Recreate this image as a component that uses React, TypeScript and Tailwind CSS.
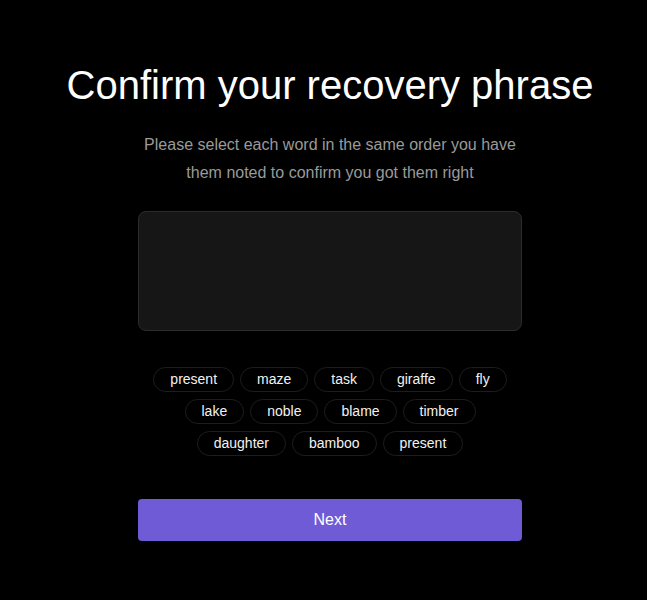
export default function App() {
  const rows = [
    ["present", "maze", "task", "giraffe", "fly"],
    ["lake", "noble", "blame", "timber"],
    ["daughter", "bamboo", "present"],
  ];
  const words = rows.flat();
  return (
    <div className="min-h-[600px] w-full bg-black pl-[13px] text-white" style={{ fontFamily: '"Liberation Sans", Arial, sans-serif' }}>
      <div className="flex flex-col items-center">
        <h1 className="mt-[59px] text-[40px] leading-[52px] text-white">Confirm your recovery phrase</h1>
        <p className="mt-[20px] w-[384px] text-center text-[16px] leading-[28px] text-[#9a9a9a]">
          Please select each word in the same order you have them noted to confirm you got them right
        </p>
        <div className="mt-[24px] w-[384px] h-[120px] rounded-lg bg-[#161616] border border-[#2c2c2c]" />
        <div className="mt-[36px] w-[384px] flex flex-wrap justify-center gap-x-[6px] gap-y-[7px] px-[10px]">
          {words.map((w, i) => (
            <button
              key={i}
              className="h-[25px] px-[16px] rounded-full border border-[#1d1d1d] bg-black text-[14px] leading-[23px] text-[#f2f2f2]"
            >
              {w}
            </button>
          ))}
        </div>
        <button className="mt-[43px] w-[384px] h-[42px] rounded-[4px] bg-[#6f5bd6] text-[16px] text-white">Next</button>
      </div>
    </div>
  );
}
